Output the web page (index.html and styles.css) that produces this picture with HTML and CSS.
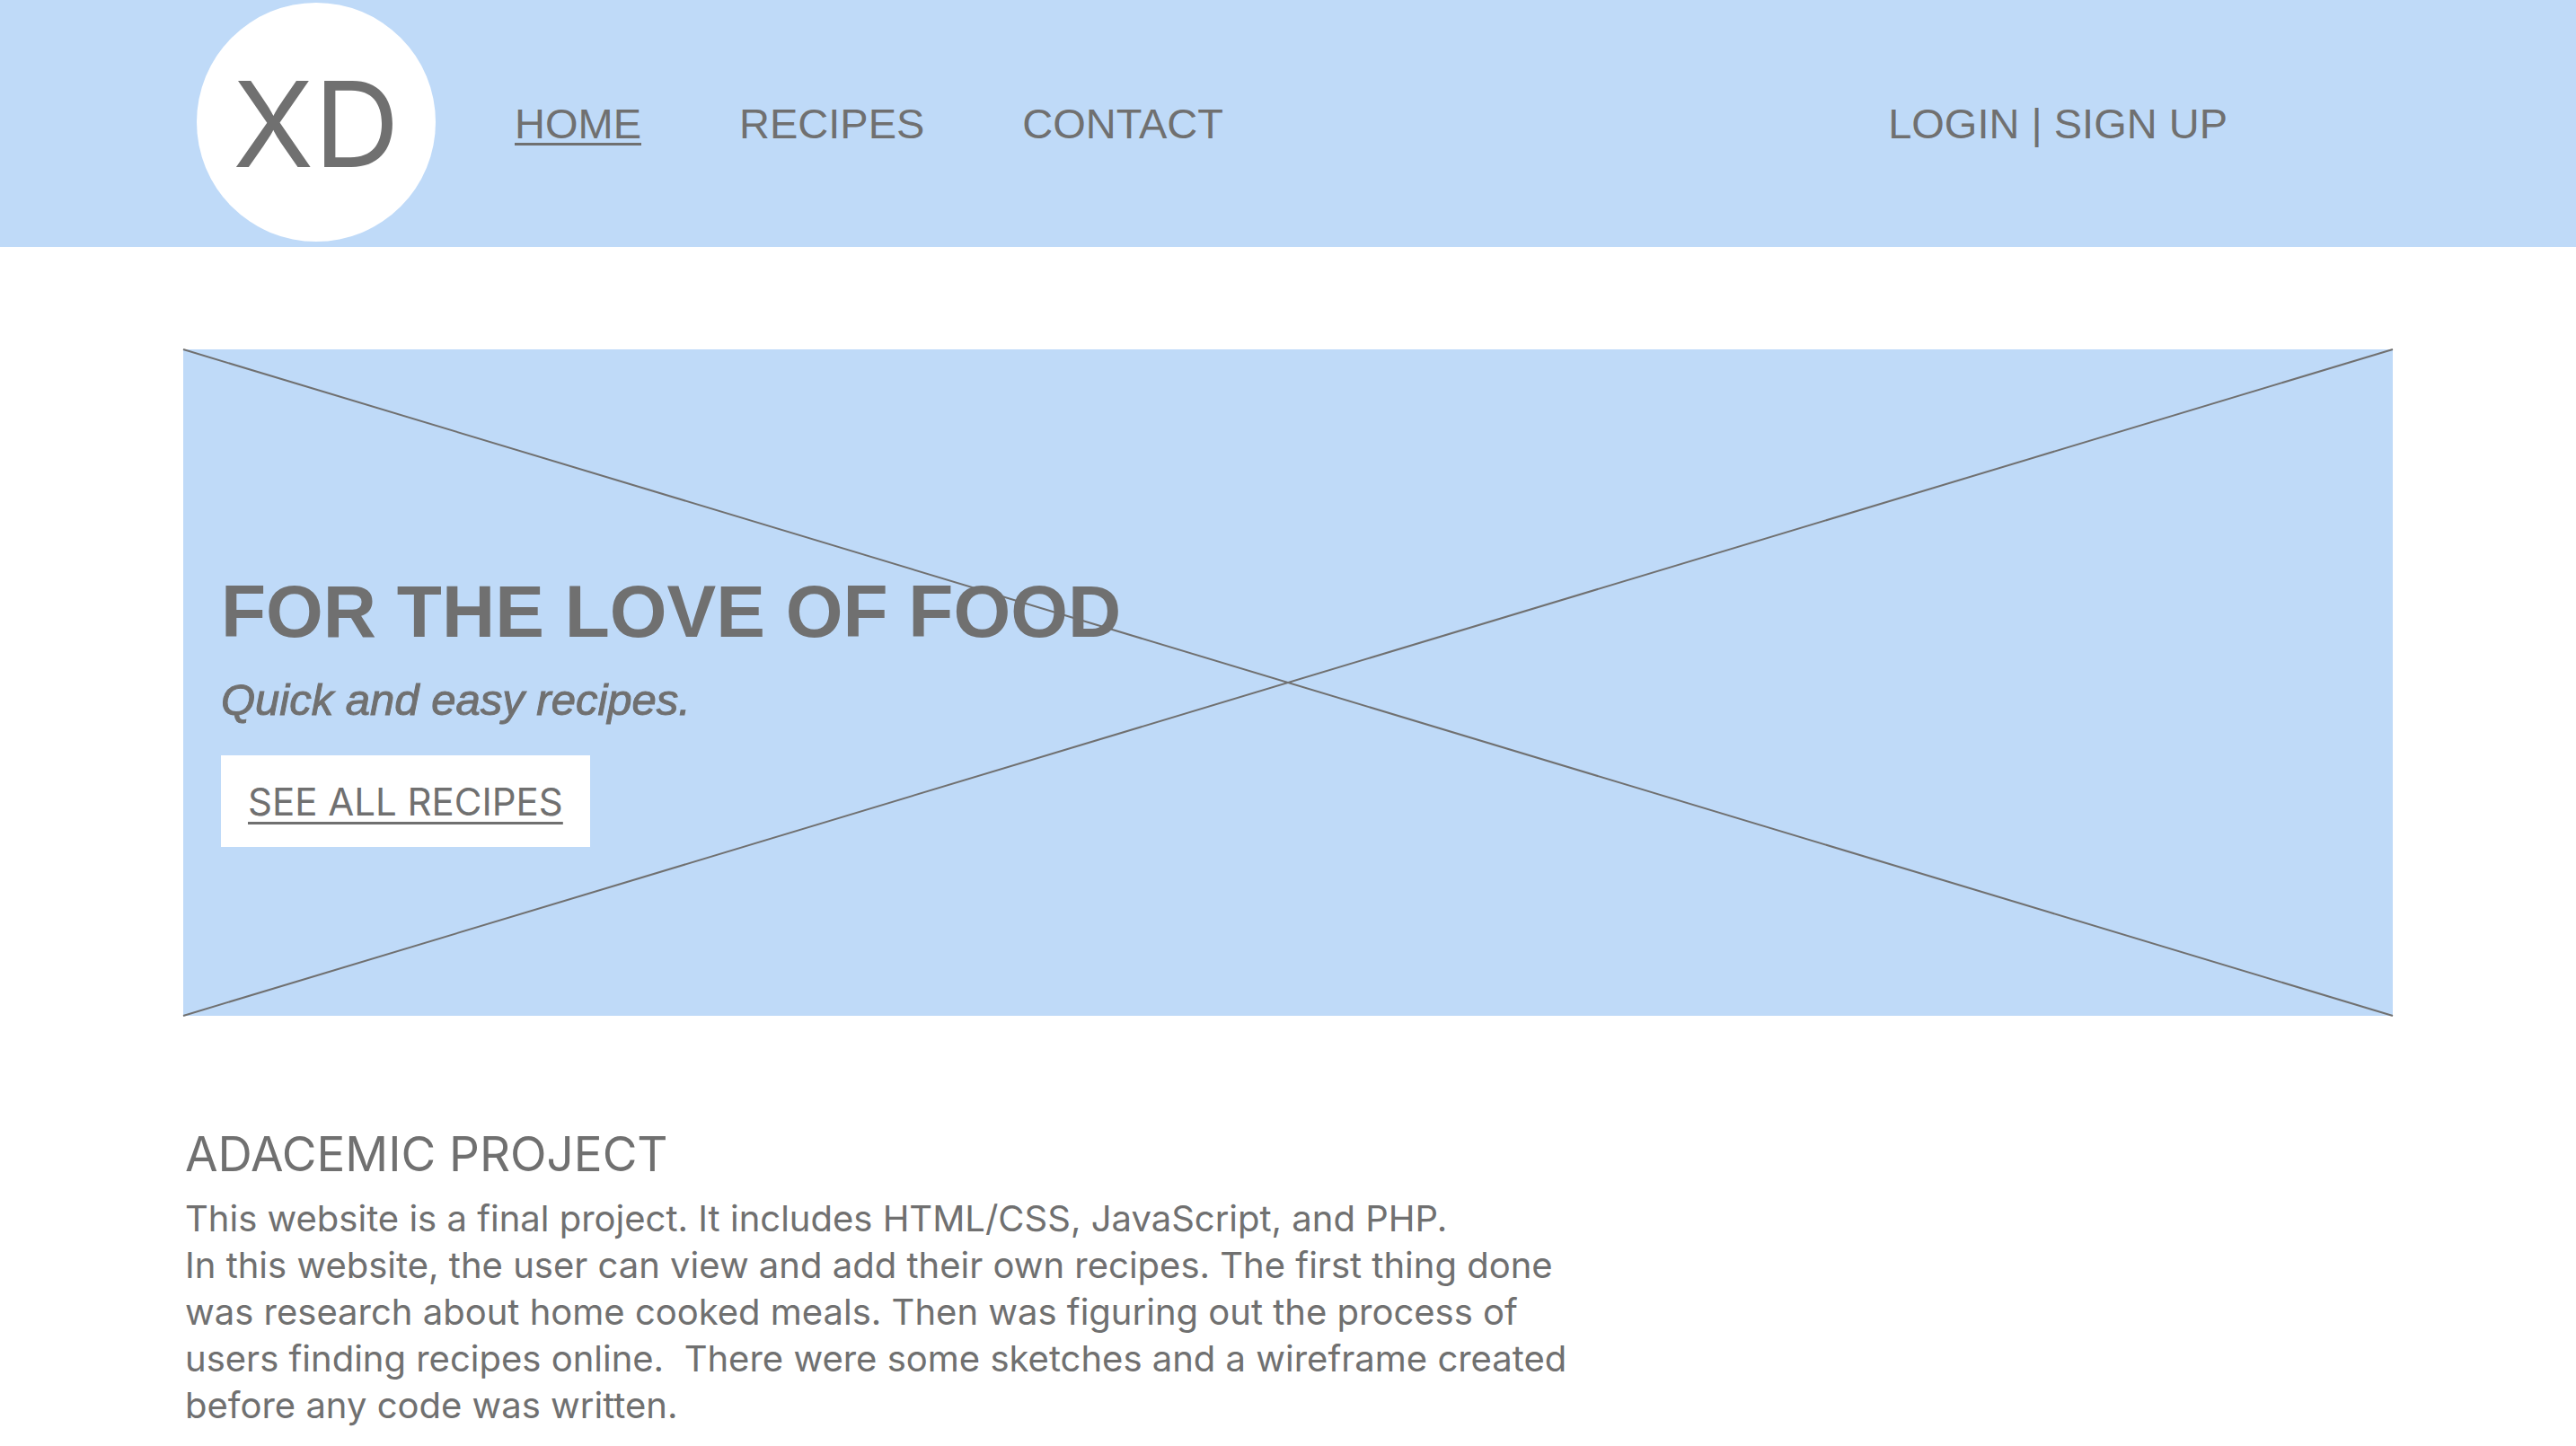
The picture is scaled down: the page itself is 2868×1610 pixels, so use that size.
FILE: index.html
```html
<!DOCTYPE html>
<html lang="en">
<head>
  <meta charset="utf-8">
  <meta name="viewport" content="width=device-width, initial-scale=1">
  <title>For the Love of Food</title>
  <link rel="stylesheet" href="styles.css">
</head>
<body>
  <header class="site-header">
    <a class="logo" href="#">XD</a>
    <nav class="main-nav">
      <a class="nav-link is-current" href="#">HOME</a>
      <a class="nav-link" href="#">RECIPES</a>
      <a class="nav-link" href="#">CONTACT</a>
    </nav>
    <div class="account">
      <a class="nav-link" href="#">LOGIN</a> | <a class="nav-link" href="#">SIGN UP</a>
    </div>
  </header>

  <main class="page">
    <section class="hero">
      <svg class="hero-cross" viewBox="0 0 100 100" preserveAspectRatio="none" aria-hidden="true">
        <line x1="0" y1="0" x2="100" y2="100"/>
        <line x1="0" y1="100" x2="100" y2="0"/>
      </svg>
      <div class="hero-content">
        <h1 class="hero-title">FOR THE LOVE OF FOOD</h1>
        <p class="hero-tagline">Quick and easy recipes.</p>
        <button class="hero-button" type="button">SEE ALL RECIPES</button>
      </div>
    </section>

    <section class="about">
      <h2 class="about-title">ADACEMIC PROJECT</h2>
      <p>This website is a final project. It includes HTML/CSS, JavaScript, and PHP.</p>
      <p>In this website, the user can view and add their own recipes. The first thing done was research about home cooked meals. Then was figuring out the process of users finding recipes online.&nbsp; There were some sketches and a wireframe created before any code was written.</p>
    </section>
  </main>
</body>
</html>
```
FILE: styles.css
```css
:root {
  --sky: #bfdaf8;
  --ink: #707070;
  --helvetica: "Liberation Sans", Arial, sans-serif;
  --body: Inter, "Liberation Sans", sans-serif;
}

* {
  box-sizing: border-box;
}

body,
h1,
h2,
p {
  margin: 0;
}

body {
  background: #fff;
  color: var(--ink);
  font-family: var(--body);
  font-size: 40px;
  line-height: 52px;
}

a {
  color: inherit;
  text-decoration: none;
}

/* Header */

.site-header {
  display: flex;
  align-items: center;
  padding: 3px 388px 6px 219px;
  background: var(--sky);
  font-family: var(--helvetica);
  font-size: 47px;
  line-height: 56px;
}

.logo {
  display: flex;
  flex: none;
  align-items: center;
  justify-content: center;
  width: 266px;
  height: 266px;
  padding-top: 4px;
  border-radius: 50%;
  background: #fff;
  font-family: var(--body);
  font-size: 132px;
}

.main-nav,
.account {
  padding-top: 4px;
}

.main-nav {
  display: flex;
  gap: 109px;
  margin-left: 88px;
}

.is-current {
  text-decoration: underline 3px;
  text-underline-offset: 5px;
}

.account {
  margin-left: auto;
  white-space: nowrap;
}

/* Hero */

.page {
  padding: 114px 204px 16px;
}

.hero {
  position: relative;
  padding: 246px 42px 188px;
  background: var(--sky);
}

.hero-cross {
  position: absolute;
  inset: 0;
  width: 100%;
  height: 100%;
  overflow: visible;
}

.hero-cross line {
  stroke: var(--ink);
  stroke-width: 2px;
  vector-effect: non-scaling-stroke;
}

.hero-content {
  position: relative;
  display: flex;
  flex-direction: column;
  align-items: flex-start;
  font-family: var(--helvetica);
}

.hero-title {
  font-size: 82px;
  line-height: 92px;
}

.hero-tagline {
  margin-top: 22px;
  font-size: 49px;
  font-style: italic;
  line-height: 60px;
  -webkit-text-stroke: 1px var(--ink);
}

.hero-button {
  margin-top: 32px;
  padding: 26px 30px 24px;
  border: 0;
  background: #fff;
  color: inherit;
  font-family: var(--body);
  font-size: 42px;
  line-height: 52px;
  text-decoration: underline 3px;
  text-underline-offset: 7px;
}

/* About */

.about {
  max-width: 1560px;
  margin-top: 122px;
  padding-left: 2px;
}

.about-title {
  margin-bottom: 14px;
  font-size: 53px;
  font-weight: 400;
  line-height: 64px;
}
```
